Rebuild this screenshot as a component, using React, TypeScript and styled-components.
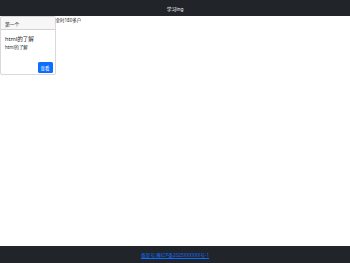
import React from "react";
import styled, { createGlobalStyle } from "styled-components";

const Global = createGlobalStyle`
  html, body { margin: 0; padding: 0; background: #fff; }
  body { font-family: "Noto Sans", "Noto Sans CJK SC", sans-serif; color: #212529; }
`;

const Page = styled.div`
  display: flex;
  flex-direction: column;
  height: 263px;
  width: 350px;
`;

const TopBar = styled.header`
  height: 16px;
  background: #212529;
  color: #fff;
  display: flex;
  align-items: center;
  justify-content: center;
  font-size: 4.8px;
  flex-shrink: 0;
`;

const Main = styled.main`
  flex: 1;
  display: flex;
  align-items: flex-start;
`;

const Card = styled.div`
  width: 55.5px;
  height: 59px;
  box-sizing: border-box;
  border: 0.5px solid rgba(0, 0, 0, 0.15);
  border-radius: 2px;
  display: flex;
  flex-direction: column;
  overflow: hidden;
`;

const CardHeader = styled.div`
  height: 12px;
  background: #f7f7f7;
  border-bottom: 0.5px solid rgba(0, 0, 0, 0.15);
  display: flex;
  align-items: center;
  padding-left: 4px;
  font-size: 4.8px;
`;

const CardBody = styled.div`
  flex: 1;
  display: flex;
  flex-direction: column;
  padding: 4px 2px 1px 4px;
`;

const CardTitle = styled.div`
  font-size: 5.6px;
  line-height: 8px;
  margin-top: 1px;
`;

const CardText = styled.div`
  font-size: 4.4px;
  line-height: 6px;
  margin-top: 1px;
`;

const Button = styled.button`
  margin-top: auto;
  align-self: flex-end;
  width: 15px;
  height: 11px;
  border: none;
  border-radius: 1.5px;
  background: #0d6efd;
  color: #fff;
  font-size: 4.5px;
  padding: 0;
  font-family: inherit;
`;

const Side = styled.div`
  font-size: 4.5px;
  line-height: 6px;
  padding-top: 1px;
`;

const Footer = styled.footer`
  height: 17px;
  background: #212529;
  display: flex;
  align-items: center;
  justify-content: center;
  flex-shrink: 0;
`;

const FooterLink = styled.a`
  color: #0d6efd;
  font-size: 4.7px;
  text-decoration: underline;
`;

export default function App() {
  return (
    <Page>
      <Global />
      <TopBar>学习ing</TopBar>
      <Main>
        <Card>
          <CardHeader>第一个</CardHeader>
          <CardBody>
            <CardTitle>html的了解</CardTitle>
            <CardText>html的了解</CardText>
            <Button>查看</Button>
          </CardBody>
        </Card>
        <Side>全时180多户</Side>
      </Main>
      <Footer>
        <FooterLink href="#">备案号:豫ICP备2025XXXXXX号-1</FooterLink>
      </Footer>
    </Page>
  );
}
